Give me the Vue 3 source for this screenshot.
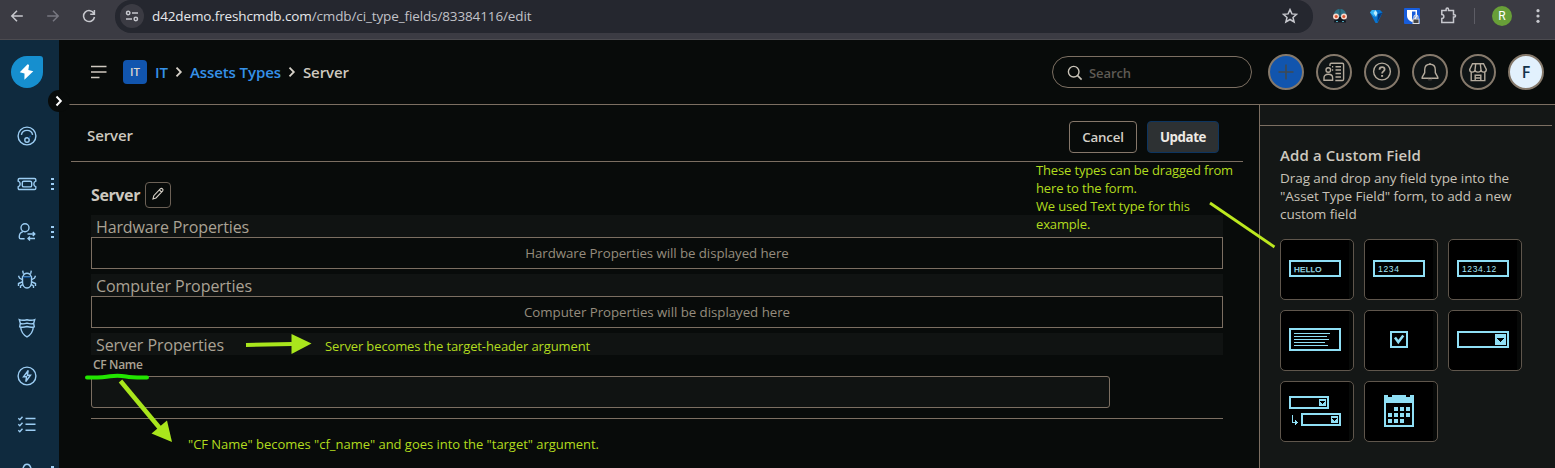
<script setup>
const navItems = [
  { id: 'gauge', menu: false },
  { id: 'ticket', menu: true },
  { id: 'user', menu: true },
  { id: 'bug', menu: false },
  { id: 'shield', menu: false },
  { id: 'bolt', menu: false },
  { id: 'tasks', menu: false },
  { id: 'more', menu: true }
]
const actions = ['plus', 'contacts', 'help', 'bell', 'store']
const fieldTypes = ['text', 'number', 'decimal', 'paragraph', 'checkbox', 'dropdown', 'dependent', 'date']
const samples = { text: 'HELLO', number: '1234', decimal: '1234.12' }
const calendarDots = [
  [10, 12], [16, 12], [22, 12],
  [4, 18], [10, 18], [16, 18], [22, 18],
  [4, 24], [10, 24], [16, 24]
]
</script>

<template>
  <div class="page">
    <header class="browser">
      <div class="nav-buttons">
        <svg width="14" height="14" viewBox="0 0 14 14"><path d="M12.8 7H2M7 1.8 1.8 7 7 12.2" class="ln light" /></svg>
        <svg width="14" height="14" viewBox="0 0 14 14"><path d="M1.2 7H12M7 1.8 12.2 7 7 12.2" class="ln dim" /></svg>
        <svg width="14" height="14" viewBox="0 0 14 14"><path d="M12 4.6A5.5 5.5 0 1 0 12.5 8M12.4 1v4.2H8.2" class="ln light" /></svg>
      </div>
      <div class="omnibox">
        <span class="site-info">
          <svg width="14" height="14" viewBox="0 0 14 14"><g class="ln light"><circle cx="3.2" cy="4" r="1.7" /><path d="M7 4h6M1 10h6" /><circle cx="10.8" cy="10" r="1.7" /></g></svg>
        </span>
        <span class="url"><b>d42demo.freshcmdb.com</b>/cmdb/ci_type_fields/83384116/edit</span>
        <svg class="star" width="16" height="16" viewBox="0 0 16 16"><path d="m8 1.6 1.9 4.3 4.7.4-3.6 3.1 1.1 4.6L8 11.5 3.9 14 5 9.4 1.4 6.3l4.7-.4z" class="ln light" /></svg>
      </div>
      <div class="extensions">
        <svg width="16" height="16" viewBox="0 0 16 16">
          <path d="M2 7C2 2.8 5 1 8 1s6 1.8 6 6v3H2z" fill="#2d7184" /><path d="M3 9h10l1 5.500H2z" fill="#111820" />
          <path d="M8 1v6" stroke="#204c5c" />
          <circle cx="4" cy="8.500" r="3" fill="#f5d8cc" /><circle cx="12" cy="8.500" r="3" fill="#f5d8cc" />
          <circle cx="4.200" cy="8.600" r="1.500" fill="#d9532c" /><circle cx="11.800" cy="8.600" r="1.500" fill="#d9532c" />
          <path d="M4 13.500h2M10 13.500h2" stroke="#4aa3b8" />
        </svg>
        <svg width="14" height="16" viewBox="0 0 14 16"><path d="M1 4.500 3 2h8l2.500 2.500L8.500 15h-2z" fill="#0875d1" /><path d="m1 4.500 2-2.500h3L5.500 9z" fill="#36b5f5" /><path d="M4.500 5 6.500 2l2 3L7 9z" fill="#bdeeff" /><path d="m9 6 4.500-1.500L8.300 14z" fill="#053c83" /></svg>
        <svg width="16" height="16" viewBox="0 0 16 16"><rect width="16" height="16" rx="1" fill="#175ddc" /><path d="M3 2h10v6c0 3-2.500 5-5 6-2.500-1-5-3-5-6z" fill="#fff" /><path d="M8 3.500h3.500V8c0 1.800-1.500 3-3.500 4z" fill="#175ddc" /><path d="M8.500 10.500h7V16h-7z" fill="#ddd" /><path d="M10 10.500V9a2 2 0 0 1 4 0v1.500" fill="none" stroke="#ddd" stroke-width="1.200" /><path d="M9.500 11.500h5V15h-5z" fill="#444" /></svg>
        <svg width="17" height="17" viewBox="0 0 17 17"><path d="M1.800 3.600h4.300V2.300a1.200 1.200 0 0 1 2.400 0v1.300h5v4.100h.9a1.100 1.100 0 0 1 0 2.300h-.9v5.500H1.800v-4c2.700-.2 2.700-3.800 0-4z" class="ln light" /></svg>
        <span class="divider"></span>
        <span class="profile">R</span>
        <svg width="4" height="16" viewBox="0 0 4 16"><g fill="#c7c8ce"><circle cx="2" cy="2.700" r="1.600" /><circle cx="2" cy="8" r="1.600" /><circle cx="2" cy="13.300" r="1.600" /></g></svg>
      </div>
    </header>

    <div class="app">
      <aside class="sidebar">
        <div class="logo">
          <svg width="16" height="18" viewBox="0 0 16 18"><path d="M8.600 1.200.8 9.200l4.700 1.300-.1 6.200 8.900-8.500-5-1.300.8-5z" fill="#fff" /></svg>
        </div>
        <span class="toggle"><svg width="8" height="12" viewBox="0 0 8 12"><path d="m1.500 1.500 4.300 4.500-4.300 4.500" fill="none" stroke="#fff" stroke-width="2" /></svg></span>
        <div v-for="item in navItems" :key="item.id" class="nav-item">
          <svg class="nav-icon" width="20" height="20" viewBox="0 0 20 20">
            <g v-if="item.id === 'gauge'"><circle cx="10" cy="10" r="8.900" /><path d="M4.400 8.900C5.500 2.900 14.500 2.900 15.600 8.900" /><circle cx="10" cy="14" r="2.200" /><path d="m11.700 12.100 2-2.300" class="navy" /></g>
            <g v-else-if="item.id === 'ticket'"><path d="M2.500 4.500h15q1.300 0 1.300 1.300v1.400c-1.300.4-2 1.400-2 2.800s.7 2.400 2 2.800v1.400q0 1.300-1.300 1.300h-15q-1.300 0-1.300-1.300v-1.400c1.300-.4 2-1.400 2-2.800s-.7-2.400-2-2.800V5.800q0-1.300 1.300-1.300z" /><rect x="5.300" y="7.300" width="9.400" height="5.600" rx="1.500" /></g>
            <g v-else-if="item.id === 'user'"><circle cx="8" cy="5.700" r="4" /><path d="M6 9.600c-2.500.8-3.700 2.400-3.700 5v1c0 1 .7 1.200 1.500 1.200h3.800M10.500 12h7.300m-2-2 2 2-2 2M18 16.500h-7m2-2-2 2 2 2" /></g>
            <g v-else-if="item.id === 'bug'"><path d="M5.500 7h9v5c0 3.500-2 6-4.500 6s-4.500-2.500-4.500-6zM6 6.500C6.500 4 8 3.200 10 3.200s3.500.8 4 3.300M5.700.7l.6 3M14.300.7l-.6 3M5 9.500 2.500 8 1.500 5.800M15 9.500 17.500 8l1-2.200M5 12l-3.500 1.500V16M15 12l3.500 1.500V16M5.500 14.500 3.500 16v2M14.500 14.500l2 1.500v2" /><path d="M6 7.300h8" class="navy" /></g>
            <g v-else-if="item.id === 'shield'"><path d="M2.300 1.700c2.700 1 5 .7 7.700 0 2.700.7 5 1 7.700 0l-1 3.600c-2.200 1-4.200.6-6.700-.2-2.500.8-4.500 1.200-6.700.2zM3.300 5.500l-.6 3.300c2.500.9 4.800.5 7.300-.3 2.500.8 4.800 1.200 7.300.3l-.6-3.300M3.700 9.200c.3 4 2.500 7.500 6.300 9.700 3.800-2.200 6-5.700 6.300-9.700" /></g>
            <g v-else-if="item.id === 'bolt'"><circle cx="10" cy="10" r="8.900" /><path d="M11.200 4.500 6.500 10.800h3L8.800 15.500l4.700-6.300h-3.100z" /></g>
            <g v-else-if="item.id === 'tasks'"><path d="m1.300 4.300 1.500 1.400 2.700-3M1.300 10.300l1.500 1.400 2.700-3M1.300 16.300l1.500 1.400 2.700-3M8.500 4.500h10M8.500 10.300h10M8.500 16.300h10" /></g>
            <g v-else><path d="M5.500 9C6 4.500 7.500 2.300 10 2.300S14 4.500 14.500 9" /></g>
          </svg>
          <span v-if="item.menu" class="dots"><i></i><i></i><i></i></span>
        </div>
      </aside>

      <div class="content">
        <div class="topbar">
          <svg class="burger" width="18" height="14" viewBox="0 0 18 14"><path d="M1 1.500h15.500M1 7h15.500M1 12.500h8.500" fill="none" stroke="#cfc9c0" stroke-width="1.400" /></svg>
          <span class="ws">IT</span>
          <nav class="crumbs">
            <a>IT</a>
            <svg width="8" height="12" viewBox="0 0 8 12"><path d="m1.500 1.700 4.300 4.300-4.300 4.300" class="chev" /></svg>
            <a>Assets Types</a>
            <svg width="8" height="12" viewBox="0 0 8 12"><path d="m1.500 1.700 4.300 4.300-4.300 4.300" class="chev" /></svg>
            <span>Server</span>
          </nav>
          <div class="search">
            <svg width="16" height="16" viewBox="0 0 16 16"><circle cx="6.700" cy="6.700" r="5.300" fill="none" stroke="#c9c3b8" stroke-width="1.400" /><path d="m10.600 10.600 4 4" stroke="#c9c3b8" stroke-width="1.600" /></svg>
            <span>Search</span>
          </div>
          <div class="actions">
            <span v-for="a in actions" :key="a" class="round" :class="a">
              <svg class="act" width="24" height="24" viewBox="0 0 24 24">
                <g v-if="a === 'plus'"><path d="M12 4.500v15M4.500 12h15" class="cross" /></g>
                <g v-else-if="a === 'contacts'"><path d="M8 6V4.600Q8 3.300 9.300 3.300h11Q21.600 3.300 21.600 4.600v14.600q0 1.300-1.300 1.300h-7" /><circle cx="6.300" cy="10" r="2.300" /><path d="M2 20.300v-2.500c0-2.200 1.600-3.500 4.300-3.500s4.300 1.300 4.300 3.500v2.500z" /><path d="M10 6.800h1.200M13.500 6.800H19M10 10h1.200M13.500 10H19M13.500 13.500H19M13.500 17H19" /></g>
                <g v-else-if="a === 'help'"><circle cx="12" cy="11.500" r="8.400" /><path d="M9.500 9.700c0-1.600 1-2.500 2.600-2.500s2.500.9 2.500 2.300c0 1.800-2.500 1.900-2.500 3.900" stroke-width="1.800" /><path d="M12.100 15v1.800" stroke-width="2" /></g>
                <g v-else-if="a === 'bell'"><path d="M12 3v1.300M6.700 12.700V10c0-3.400 2-5.700 5.300-5.700s5.300 2.300 5.300 5.700v2.700l2.500 4.500v1H4.200v-1z" /><path d="M10 19.400q2 1 4 0" stroke="#3e3b37" /></g>
                <g v-else><path d="M6.500 3.800h11l2.800 5.700c0 1.500-1 2.600-2.500 2.600S15 11.300 15 9.800c0 1.500-1.300 2.300-3 2.300s-3-.8-3-2.300c0 1.500-1.300 2.300-2.800 2.300S3.700 11 3.700 9.500zM9.700 4 9 9.800M14.300 4l.7 5.800M5.200 12.300v8.300h13.600v-8.300M9.200 20.500v-5.200h5.600v5.200M9.200 18h5.600" /></g>
              </svg>
            </span>
            <span class="round avatar">F</span>
          </div>
        </div>

        <div class="body">
          <main class="main">
            <div class="title-row">
              <h1>Server</h1>
              <button class="btn cancel">Cancel</button>
              <button class="btn update">Update</button>
            </div>
            <div class="form">
              <div class="form-head">
                <h2>Server</h2>
                <span class="edit"><svg width="14" height="14" viewBox="0 0 14 14"><path d="m2 11.900.8-3.200 6.700-7q1-.8 2 .2t.2 2L5 10.900zM8.400 3l2.200 2.200" fill="none" stroke="#d8d2c8" stroke-width="1.100" /></svg></span>
              </div>
              <h3 class="hw">Hardware Properties</h3>
              <div class="slot"><span class="slot-hw">Hardware Properties will be displayed here</span></div>
              <h3 class="cp">Computer Properties</h3>
              <div class="slot"><span class="slot-cp">Computer Properties will be displayed here</span></div>
              <h3 class="sp">Server Properties</h3>
              <label>CF Name</label>
              <div class="input"></div>
              <hr />
            </div>
          </main>

          <aside class="panel">
            <div class="panel-strip"></div>
            <h4>Add a Custom Field</h4>
            <p>Drag and drop any field type into the<br />"Asset Type Field" form, to add a new<br />custom field</p>
            <div class="cards">
              <div v-for="f in fieldTypes" :key="f" class="card">
                <span v-if="samples[f]" class="sample" :class="f">{{ samples[f] }}</span>
                <svg v-else width="52" height="34" viewBox="0 0 52 34" shape-rendering="crispEdges">
                  <g v-if="f === 'paragraph'"><rect x="1" y="5" width="50" height="21" class="box" /><path d="M5 9.500h36M5 12.500h33M5 15.500h35M5 18.500h31M5 21.500h34" class="thin" /></g>
                  <g v-else-if="f === 'checkbox'"><rect x="18" y="8" width="16" height="15" class="box" /><path d="m22 13.500 3.300 4.500 5-6.500" class="tick" shape-rendering="auto" /></g>
                  <g v-else-if="f === 'dropdown'"><rect x="1" y="8" width="50" height="15" class="box" /><path d="M38 10h11v11H38z" class="fill" /><path d="M40 14h7v1h-1v1h-1v1h-1v1h-1v-1h-1v-1h-1v-1h-1z" /></g>
                  <g v-else-if="f === 'dependent'">
                    <rect x="1" y="2" width="38" height="11" class="box" /><path d="M30 4h7v7h-7z" class="fill" /><path d="M31 6h5v1h-1v1h-1v1h-1V8h-1V7h-1z" />
                    <rect x="13" y="19" width="38" height="11" class="box" /><path d="M42 21h7v7h-7z" class="fill" /><path d="M43 23h5v1h-1v1h-1v1h-1v-1h-1v-1h-1z" />
                    <path d="M3 20h1v7h2v-2h1v1h1v1h1v1H8v1H7v1H6v-2H3z" class="fill" />
                  </g>
                  <g v-else transform="translate(11 0)"><path d="M0 0h4v2h4V0h14v2h4V0h4v32H0z" class="fill" /><path d="M2 8h26v22H2z" /><rect v-for="d in calendarDots" :key="d.join()" :x="d[0]" :y="d[1]" width="4" height="4" class="fill" /></g>
                </svg>
              </div>
            </div>
          </aside>
        </div>
      </div>
    </div>

    <div class="note note-types">These types can be dragged from<br />here to the form.<br />We used Text type for this<br />example.</div>
    <div class="note note-header">Server becomes the target-header argument</div>
    <div class="note note-target">"CF Name" becomes "cf_name" and goes into the "target" argument.</div>
    <svg class="marks" width="1555" height="468" viewBox="0 0 1555 468">
      <path d="m1210 203 64.500 44" stroke="#bce81f" stroke-width="2.800" fill="none" />
      <path d="m246 345 46-1" stroke="#a9e61c" stroke-width="4" />
      <path d="m291.500 334 20 9.500-20 10.500z" fill="#a9e61c" />
      <path d="M87 377.500c12 .2 17 0 23-1.200q8-1.200 16 .2c6 1.200 12 1 21 1" fill="none" stroke="#22e600" stroke-width="4" stroke-linecap="round" />
      <path d="m120.500 381 40 48" stroke="#a9e61c" stroke-width="4.500" />
      <path d="m151.500 433.500 15.500-13 5 21.500z" fill="#a9e61c" />
    </svg>
  </div>
</template>

<style>
body { background: #080b0a; overflow: hidden; }
</style>
<style scoped>
* { box-sizing: border-box; margin: 0; }
.page { position: relative; width: 1555px; height: 468px; overflow: hidden; background: #080b0a; color: #cdc8bf; font-family: "Open Sans", "Noto Sans", sans-serif; display: flex; flex-direction: column; }
svg { display: block; flex: none; }
.ln { fill: none; stroke-width: 1.5; }
.light { stroke: #c7c8ce; }
.dim { stroke: #777780; }

.browser { height: 40px; flex: none; background: #3b3b43; border-bottom: 1px solid #4c4b50; display: flex; align-items: flex-start; }
.nav-buttons { display: flex; gap: 22px; width: 115px; padding: 9px 0 0 10px; }
.omnibox { width: 1198px; height: 33px; background: #25272f; display: flex; align-items: center; border-radius: 16px; }
.site-info { width: 24px; height: 24px; margin: -1px 0 0 5px; border-radius: 50%; background: #3b3b43; display: flex; align-items: center; justify-content: center; }
.url { margin-left: 8px; flex: 1; margin-top: -2px; font-size: 13.5px; letter-spacing: -0.12px; color: #c1c2c8; }
.url b { font-weight: 400; color: #e6e7eb; }
.star { margin: -1px 15px 0 0; }
.extensions { display: flex; align-items: center; height: 32px; padding-left: 19px; width: 242px; }
.extensions > * { flex: none; }
.extensions > :nth-child(2) { margin-left: 21px; }
.extensions > :nth-child(3) { margin-left: 21px; }
.extensions > :nth-child(4) { margin-left: 20px; margin-top: -2px; }
.divider { width: 1px; height: 16px; background: #5d5d65; margin-left: 17px; }
.profile { width: 20px; height: 20px; margin-left: 17px; border-radius: 50%; background: #689f38; color: #fff; font: 12px/20px Roboto, sans-serif; text-align: center; }
.profile + svg { margin-left: 24px; }

.app { display: flex; height: 428px; }
.sidebar { position: relative; width: 59px; background: #0f2a3e; flex: none; }
.logo { width: 32px; height: 32px; margin: 16px 0 24px 11px; border-radius: 16px 3px 16px 16px; background: #168fcf; display: flex; align-items: center; justify-content: center; }
.toggle { position: absolute; left: 48px; top: 50px; width: 22px; height: 22px; border-radius: 50%; background: #080b0a; display: flex; align-items: center; justify-content: center; }
.nav-item { display: flex; align-items: center; height: 48px; padding-left: 17px; }
.nav-icon { fill: none; stroke: #9ccdf3; stroke-width: 1.4; }
.nav-icon .navy { stroke: #0d4b8c; }
.dots { display: flex; flex-direction: column; gap: 3px; margin-left: 14px; }
.dots i { width: 3px; height: 2px; background: #9ccdf3; }

.content { width: 1496px; display: flex; flex-direction: column; }
.topbar { height: 65px; flex: none; display: flex; align-items: center; padding-left: 32px; border-style: solid; border-width: 0 0 1px; border-image: linear-gradient(90deg, transparent 9px, #7c6f62 9px) 1; }
.ws { width: 24px; height: 24px; margin-left: 15px; border-radius: 4px; background: #1155ae; font-size: 11.5px; line-height: 23px; font-weight: 600; text-align: center; color: #dcd7cf; }
.burger { margin-left: -1px; }
.crumbs { display: flex; align-items: center; margin-left: 8px; font-size: 15px; line-height: 20px; font-weight: 600; letter-spacing: -0.085px; width: 897px; }
.crumbs a { color: #3591e8; }
.crumbs svg { margin: 0 7px; }
.chev { fill: none; stroke: #d7d2c9; stroke-width: 1.8; }
.search { width: 200px; height: 32px; border: 1px solid #7c6f62; border-radius: 16px; padding: 1px 0 0 14px; display: flex; align-items: center; gap: 6px; font-size: 13px; font-weight: 600; letter-spacing: -0.08px; color: #5e5a54; }
.actions { display: flex; gap: 12px; margin-left: 16px; }
.round { width: 36px; height: 36px; border: 2px solid #85796b; border-radius: 50%; background: #101516; display: flex; align-items: center; justify-content: center; flex: none; }
.plus { background: #1155ae; }
.act { fill: none; stroke: #b4ab9d; stroke-width: 1.4; }
.cross { stroke: #3f4a52; stroke-width: 1.6; }
.avatar { background: #e2f1fd; color: #12344d; font: 600 16px "Open Sans", sans-serif; }

.body { display: flex; height: 363px; }
.main { width: 1200px; flex: none; padding-left: 12px; }
.title-row { width: 1172px; height: 57px; border-bottom: 1px solid #7c6f62; display: flex; padding: 16px 24px 0 16px; gap: 10px; }
h1 { flex: 1; font-size: 15px; line-height: 29px; font-weight: 600; letter-spacing: -0.083px; }
.btn { height: 32px; padding: 0; border-radius: 4px; font: 600 13.3px "Open Sans", sans-serif; letter-spacing: -0.177px; color: #d5d0c8; }
.cancel { width: 68px; border: 1px solid #85776a; background: transparent; }
.update { width: 72px; border: 1px solid #0d3560; background: #2d3133; color: #eeeae4; font-weight: 700; letter-spacing: -0.42px; }
.form { width: 1132px; margin-left: 20px; }
.form-head { height: 53px; display: flex; padding-top: 20px; }
h2 { font-size: 16px; line-height: 26px; font-weight: 700; letter-spacing: -0.39px; width: 54px; }
.edit { width: 26px; height: 26px; border: 1px solid #6c6156; border-radius: 4px; padding-bottom: 2px; display: flex; align-items: center; justify-content: center; }
h3 { height: 22px; padding-left: 5px; background: #101312; font-size: 16px; line-height: 25px; font-weight: 400; color: #aaa294; }
.hw { letter-spacing: -0.128px; }
.cp { letter-spacing: -0.05px; }
.sp { letter-spacing: -0.084px; }
.slot { height: 32px; margin-bottom: 5px; border: 1px solid #7c6f62; font-size: 13.3px; line-height: 31px; text-align: center; color: #958b7d; }
.slot-hw { letter-spacing: -0.071px; }
.slot-cp { letter-spacing: -0.041px; }
label { display: block; height: 21px; padding-left: 2px; font-size: 12px; line-height: 19px; font-weight: 600; letter-spacing: -0.335px; color: #aaa294; }
.input { width: 1019px; height: 32px; border: 1px solid #7c6f62; border-radius: 3px; background: #101312; }
hr { border: 0; height: 1px; margin-top: 10px; background: #7c6f62; }

.panel { flex: 1; border-left: 1px solid #7c6f62; background: #141716; padding-left: 20px; }
.panel-strip { height: 21px; margin: 0 3px 0 -20px; border-bottom: 1px solid #7c6f62; }
h4 { margin-top: 18px; font-size: 15px; line-height: 22px; font-weight: 600; letter-spacing: 0.108px; }
p { margin-top: 3px; font-size: 13.5px; line-height: 18px; letter-spacing: -0.06px; color: #c8c2b8; white-space: nowrap; }
.cards { display: grid; grid-template-columns: repeat(3, 74px); grid-auto-rows: 61px; gap: 10px; margin-top: 16px; }
.card { border: 1px solid #5f564c; border-radius: 5px; background: linear-gradient(90deg, #000 68px, #070908 68px); padding: 13px 0 0 8px; }
.card .box { fill: none; stroke: #8fdff5; stroke-width: 2; transform: translateY(0); }
.card svg { margin-top: 0; }
.card .fill { fill: #8fdff5; }
.card .thin { stroke: #8fdff5; stroke-width: 1; fill: none; }
.card .tick { stroke: #8fdff5; stroke-width: 2.6; fill: none; }
.sample { display: block; width: 52px; height: 17px; margin-top: 7px; padding-left: 3px; border: 2px solid #8fdff5; color: #a5e6f8; font: 8.5px/14px "Liberation Sans", sans-serif; }
.text { font-size: 8px; line-height: 15px; letter-spacing: 0.3px; -webkit-text-stroke: 0.25px #a5e6f8; }
.number { letter-spacing: 0.7px; }
.decimal { letter-spacing: 0.6px; }

.note { position: absolute; color: #b2dc1e; font-size: 13px; line-height: 18px; white-space: nowrap; }
.note-types { left: 1036px; top: 161px; letter-spacing: -0.145px; }
.note-header { left: 325px; top: 337px; letter-spacing: -0.122px; }
.note-target { left: 188px; top: 435px; letter-spacing: -0.025px; }
.marks { position: absolute; left: 0; top: 0; }
</style>
